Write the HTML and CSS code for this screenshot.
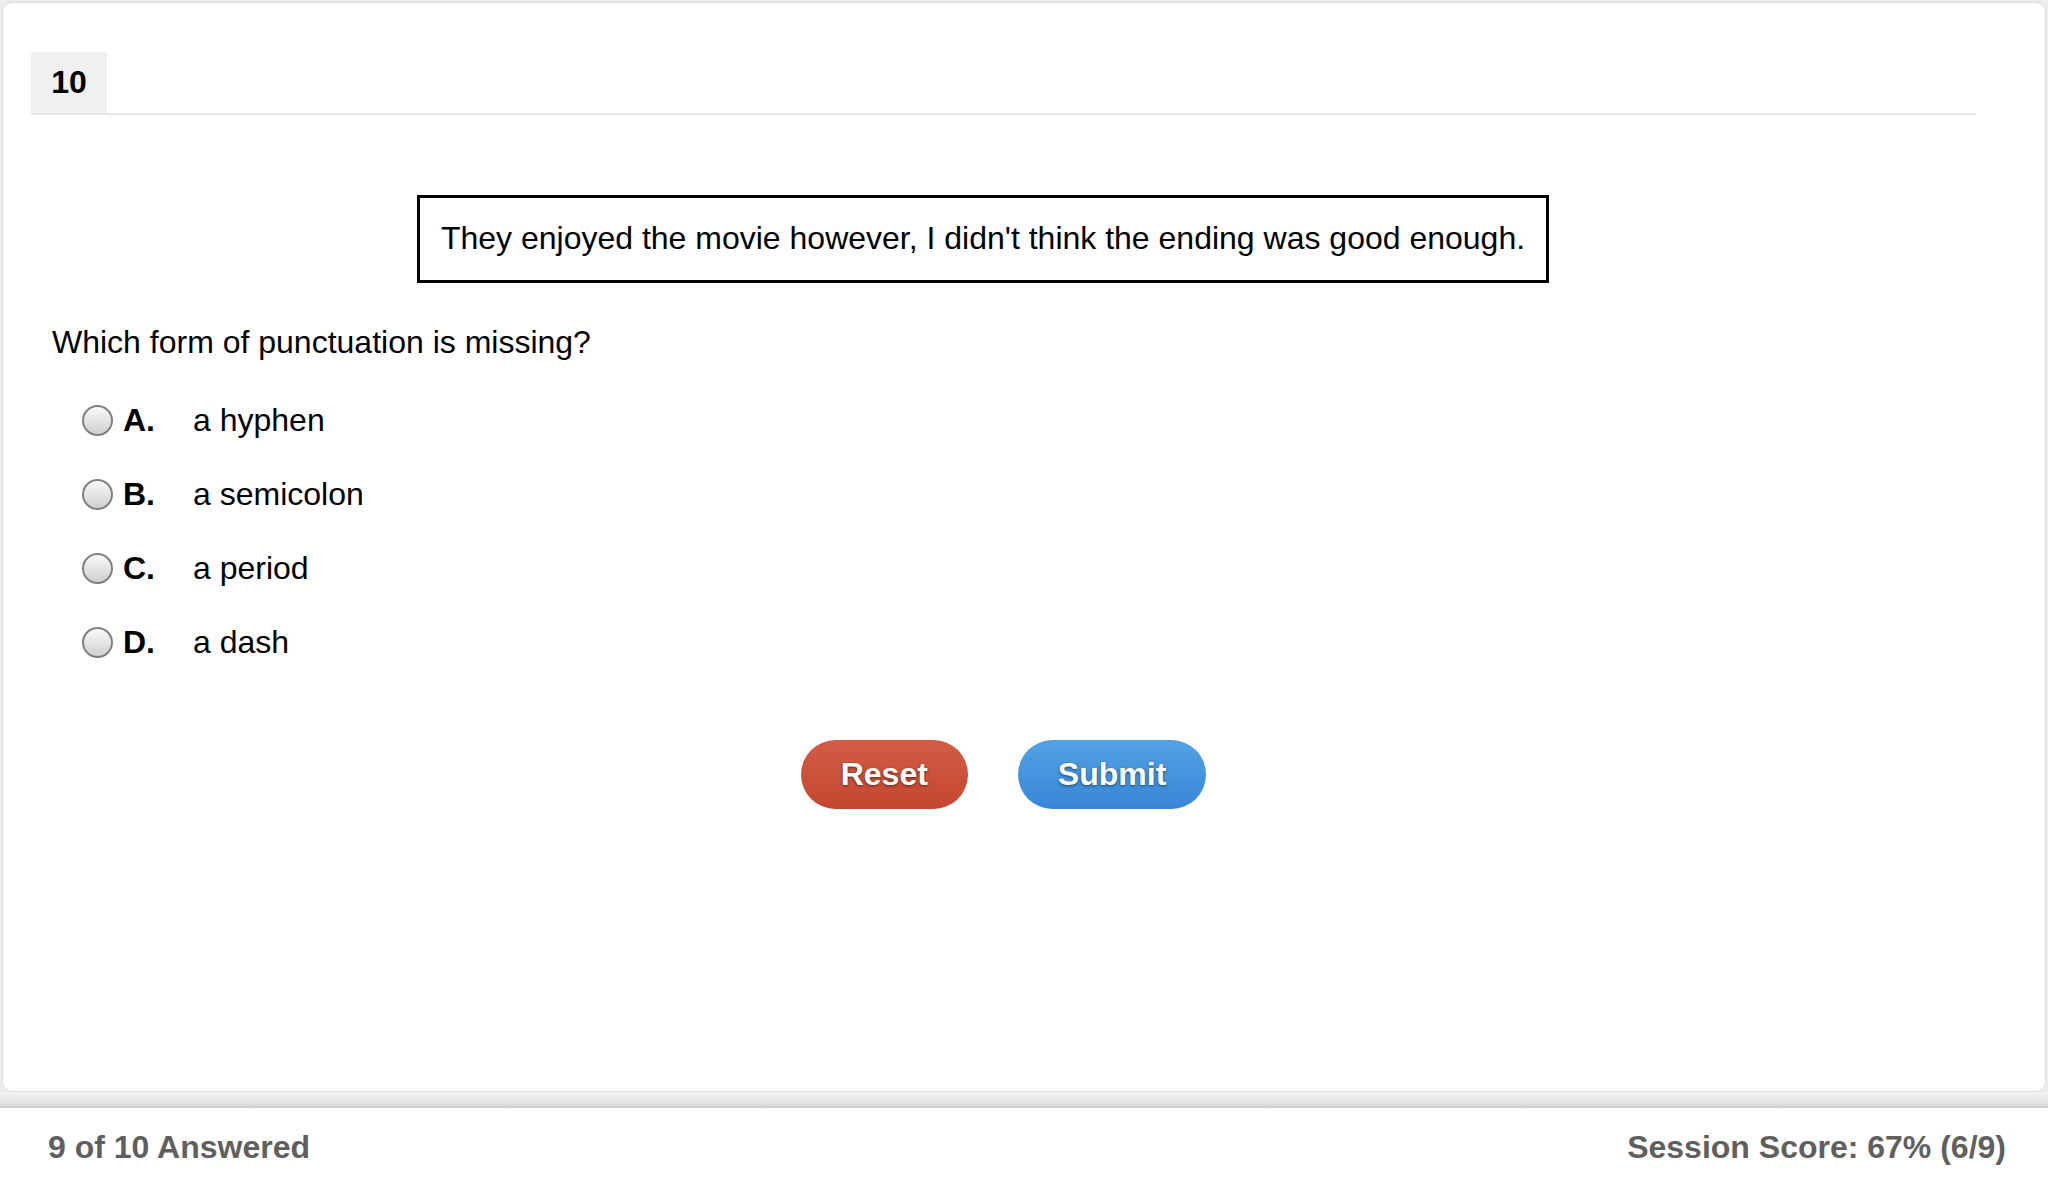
FILE: index.html
```html
<!DOCTYPE html>
<html lang="en">
<head>
  <meta charset="UTF-8" />
  <meta name="viewport" content="width=device-width, initial-scale=1.0"/>
  <title>Question 10</title>
  <link rel="stylesheet" href="styles.css">
</head>
<body>

  <div class="card">
    <div class="question-header">
      <span class="question-number">10</span>
    </div>

    <div class="stimulus">They enjoyed the movie however, I didn't think the ending was good enough.</div>

    <p class="prompt">Which form of punctuation is missing?</p>

    <ul class="options">
      <li class="option"><span class="radio"></span><span class="letter">A.</span><span class="answer">a hyphen</span></li>
      <li class="option"><span class="radio"></span><span class="letter">B.</span><span class="answer">a semicolon</span></li>
      <li class="option"><span class="radio"></span><span class="letter">C.</span><span class="answer">a period</span></li>
      <li class="option"><span class="radio"></span><span class="letter">D.</span><span class="answer">a dash</span></li>
    </ul>

    <div class="actions">
      <button class="btn btn-reset">Reset</button>
      <button class="btn btn-submit">Submit</button>
    </div>
  </div>

  <div class="band"></div>

  <div class="footer">
    <span>9 of 10 Answered</span>
    <span>Session Score: 67% (6/9)</span>
  </div>

</body>
</html>
```

FILE: styles.css
```css
html, body {
  height: 100%;
}

body {
  margin: 0;
  display: flex;
  flex-direction: column;
  font-family: "Liberation Sans", Arial, sans-serif;
  background: #ececec;
  color: #000;
}

.card {
  flex: 1;
  margin: 2px 2px 0 2px;
  padding: 49px 69px 0 28px;
  background: #fff;
  border: 1px solid #dcdcdc;
  border-radius: 10px;
  box-sizing: border-box;
}

.question-header {
  border-bottom: 2px solid #e6e6e6;
  display: flex;
}

.question-number {
  width: 76px;
  height: 61px;
  background: #f0f0f0;
  font-size: 32px;
  font-weight: bold;
  display: flex;
  align-items: center;
  justify-content: center;
}

.stimulus {
  margin: 80px 0 0 386px;
  width: 1132px;
  box-sizing: border-box;
  border: 3px solid #000;
  padding: 21px 0 23px;
  font-size: 32px;
  line-height: 38px;
  text-align: center;
}

.prompt {
  margin: 40px 0 0 21px;
  font-size: 32px;
  line-height: 38px;
}

.options {
  list-style: none;
  margin: 22px 0 0 0;
  padding: 0;
}

.option {
  display: flex;
  align-items: center;
  height: 74px;
  padding-left: 51px;
  font-size: 32px;
  line-height: 38px;
}

.radio {
  width: 27px;
  height: 27px;
  border: 2px solid #808080;
  border-radius: 50%;
  background: linear-gradient(#fafafa, #cfcfcf);
  margin-right: 10px;
  flex-shrink: 0;
}

.letter {
  width: 70px;
  font-weight: bold;
}

.actions {
  display: flex;
  justify-content: center;
  gap: 50px;
  margin-top: 61px;
}

.btn {
  height: 69px;
  padding: 0 40px;
  border: none;
  border-radius: 35px;
  font-family: "Liberation Sans", Arial, sans-serif;
  font-size: 32px;
  font-weight: bold;
  color: #fff;
  text-shadow: 0 1px 3px rgba(0, 0, 0, 0.55);
  cursor: pointer;
}

.btn-reset {
  background: linear-gradient(#d35c46, #c3472f);
}

.btn-submit {
  background: linear-gradient(#52a2e4, #3886d6);
}

.band {
  height: 16px;
  background: linear-gradient(#f4f4f4, #e2e2e2 70%, #c8c8c8);
}

.footer {
  height: 83px;
  box-sizing: border-box;
  padding: 20px 42px 0 48px;
  background: #fff;
  display: flex;
  justify-content: space-between;
  font-size: 32px;
  line-height: 38px;
  font-weight: bold;
  color: #5f5f5f;
}
```
